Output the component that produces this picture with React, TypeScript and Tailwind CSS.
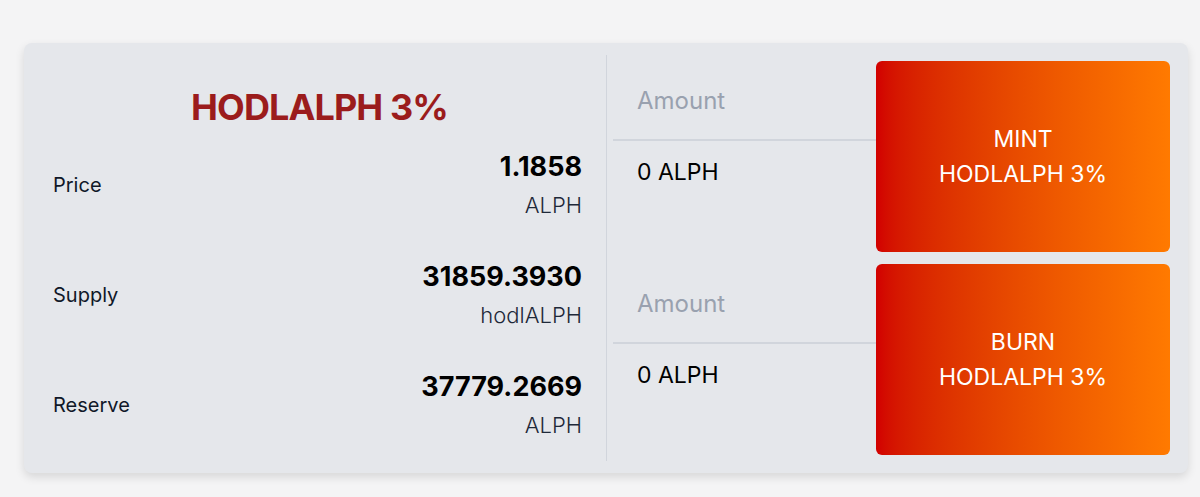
import React from 'react';

type Stat = { label: string; value: string; unit: string };

const stats: Stat[] = [
  { label: 'Price', value: '1.1858', unit: 'ALPH' },
  { label: 'Supply', value: '31859.3930', unit: 'hodlALPH' },
  { label: 'Reserve', value: '37779.2669', unit: 'ALPH' },
];

const ActionRow = ({ action }: { action: string }) => (
  <div className="flex h-[191px]">
    <div className="w-[263px] flex flex-col">
      <input
        type="text"
        placeholder="Amount"
        className="h-[80px] w-full bg-transparent pl-6 text-2xl text-black placeholder:text-gray-400 outline-none border-b-2 border-gray-300"
      />
      <p className="pl-6 pt-[17px] text-[23px] leading-7 text-black">0 ALPH</p>
    </div>
    <button className="flex-1 rounded-md bg-gradient-to-r from-[#d20000] to-[#ff7a00] text-white text-[23px] leading-[35px] flex flex-col items-center justify-center">
      <span>{action}</span>
      <span>HODLALPH 3%</span>
    </button>
  </div>
);

export default function App() {
  return (
    <div className="min-h-screen bg-[#f4f4f5] pt-[43px] pl-6 font-['Inter',sans-serif]">
      <div className="w-[1164px] h-[430px] rounded-lg bg-gray-200 shadow-[0_4px_10px_rgba(0,0,0,0.12)] p-3 flex">
        {/* token stats */}
        <div className="w-[571px] border-r border-gray-300 pt-8 pl-[17px] pr-6">
          <h1 className="text-center text-4xl leading-10 font-bold tracking-tight text-[#9b1c1c] pl-1">
            HODLALPH 3%
          </h1>
          <div className="mt-6 flex flex-col gap-[42px]">
            {stats.map((s) => (
              <div key={s.label} className="flex items-center justify-between h-[68px]">
                <span className="text-xl leading-7 text-gray-900">{s.label}</span>
                <div className="flex flex-col items-end gap-2">
                  <span className="text-[27px] leading-8 font-bold text-black">{s.value}</span>
                  <span className="text-[22px] leading-7 font-light text-gray-800">{s.unit}</span>
                </div>
              </div>
            ))}
          </div>
        </div>

        {/* mint / burn */}
        <div className="flex-1 p-1.5 flex flex-col gap-3">
          <ActionRow action="MINT" />
          <ActionRow action="BURN" />
        </div>
      </div>
    </div>
  );
}
